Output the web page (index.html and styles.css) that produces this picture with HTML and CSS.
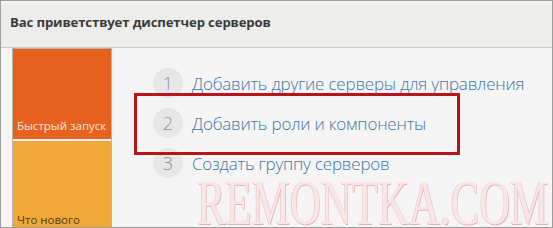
FILE: index.html
```html
<!DOCTYPE html>
<html lang="ru">
<head>
<meta charset="utf-8">
<link rel="stylesheet" href="styles.css">
</head>
<body>
<div class="frame">
  <div class="header">
    <h1 class="title">Вас приветствует диспетчер серверов</h1>
  </div>
  <div class="main">
    <div class="tiles">
      <div class="tile tile-quick"><span>Быстрый запуск</span></div>
      <div class="tile tile-new"><span>Что нового</span></div>
    </div>
    <ol class="steps">
      <li class="step"><span class="num">1</span><span class="link">Добавить другие серверы для управления</span></li>
      <li class="step"><span class="num">2</span><span class="link">Добавить роли и компоненты</span></li>
      <li class="step"><span class="num">3</span><span class="link">Создать группу серверов</span></li>
    </ol>
    <div class="highlight"></div>
    <div class="watermark">REMONTKA.COM</div>
  </div>
</div>
</body>
</html>
```

FILE: styles.css
```css
html, body {
  margin: 0;
  padding: 0;
  background: #f4f5f4;
}
.frame {
  width: 553px;
  height: 228px;
  box-sizing: border-box;
  border: 1px solid #9c9e9c;
  overflow: hidden;
  display: flex;
  flex-direction: column;
  font-family: "Open Sans", "Noto Sans", sans-serif;
}
.header {
  height: 47px;
  flex: none;
  box-sizing: border-box;
  background: #edeeec;
  border-top: 1px solid #f8f8f8;
  border-bottom: 1px solid #c9cbc9;
  padding: 11px 0 0 9px;
}
.title {
  margin: 0;
  font-size: 13.2px;
  font-weight: 700;
  color: #3a3a3a;
  letter-spacing: -0.15px;
}
.main {
  position: relative;
  flex: 1;
  display: flex;
  padding-left: 11px;
  background: #f4f5f4;
}
.tiles {
  width: 98px;
  border: 1px solid #b4b6b4;
  border-bottom: none;
  display: flex;
  flex-direction: column;
  gap: 2px;
  background: #f4f5f4;
}
.tile {
  display: flex;
  align-items: flex-end;
  padding: 0 0 6px 4px;
  font-size: 11.5px;
  box-sizing: border-box;
}
.tile-quick {
  height: 90px;
  background: #e8621f;
  color: #fbe9dc;
}
.tile-new {
  flex: 1;
  padding-bottom: 0;
  background: #f1a83a;
  color: #5b3a14;
}
.steps {
  list-style: none;
  margin: 0;
  padding: 20px 0 0 41px;
  display: flex;
  flex-direction: column;
  gap: 10px;
}
.step {
  display: flex;
  align-items: center;
  gap: 9px;
  height: 30px;
}
.num {
  width: 30px;
  height: 30px;
  border-radius: 50%;
  background: #e6e7e6;
  color: #8e908e;
  font-size: 18px;
  font-weight: 300;
  display: flex;
  align-items: center;
  justify-content: center;
}
.link {
  font-size: 17px;
  color: #3f76a5;
  font-weight: 300;
  letter-spacing: -0.2px;
  white-space: nowrap;
}
.highlight {
  position: absolute;
  left: 133px;
  top: 45px;
  width: 326px;
  height: 62px;
  box-sizing: border-box;
  border: 3px solid #b8141c;
}
.watermark {
  position: absolute;
  left: 196px;
  top: 131px;
  font-family: "Liberation Serif", serif;
  font-size: 64px;
  color: #f9e6e6;
  text-shadow: 1px 1px 0 #e4b4b4, -1px 0 0 #eccaca;
  line-height: 0.75;
  white-space: nowrap;
  transform: scaleX(0.67);
  transform-origin: left top;
}
```
